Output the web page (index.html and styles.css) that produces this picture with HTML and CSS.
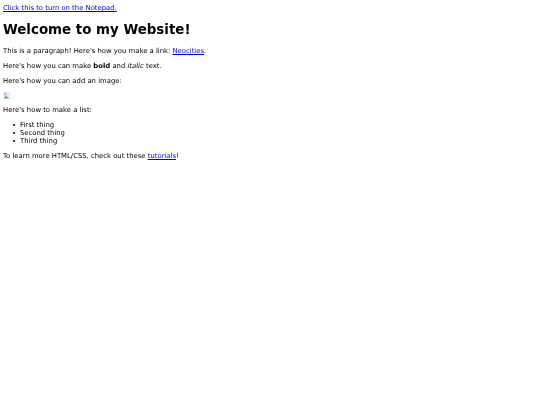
FILE: index.html
```html
<!DOCTYPE html>
<html>
<head>
  <meta charset="UTF-8" />
  <title>My Website</title>
  <link rel="stylesheet" href="styles.css">
</head>
<body>
  <a href="#">Click this to turn on the Notepad.</a>

  <h1>Welcome to my Website!</h1>

  <p>This is a paragraph! Here's how you make a link: <a href="#">Neocities</a>.</p>

  <p>Here's how you can make <strong>bold</strong> and <em>italic</em> text.</p>

  <p>Here's how you can add an image:</p>

  <svg class="broken-image" width="8" height="7" viewBox="0 0 8 7">
    <rect x="0.5" y="0.3" width="6" height="6.2" fill="#eef2f8" stroke="#d0d4da" stroke-width="0.5" />
    <rect x="1" y="0.8" width="3" height="2.5" fill="#b4c8ec" />
    <path d="M1 6.5 L3 3.5 L6 6.5 Z" fill="#6aab6a" />
  </svg>

  <p>Here's how to make a list:</p>

  <ul>
    <li>First thing</li>
    <li>Second thing</li>
    <li>Third thing</li>
  </ul>

  <p>To learn more HTML/CSS, check out these <a href="#">tutorials</a>!</p>
</body>
</html>
```

FILE: styles.css
```css
html {
  background-color: #fff;
}

body {
  margin: 4px 3px 3px;
  font-family: "DejaVu Sans", sans-serif;
  font-size: 6.85px;
  line-height: 8px;
  color: #000;
  filter: blur(0.25px);
}

a {
  color: #0000ee;
}

h1 {
  font-size: 13.4px;
  line-height: 16px;
  margin: 10px 0 9px;
}

p {
  margin: 7px 0;
}

ul {
  margin: 7px 0;
  padding-left: 10px;
  list-style: none;
}

li {
  display: flex;
  align-items: center;
  gap: 5px;
}

li::before {
  content: "";
  width: 2px;
  height: 2px;
  border-radius: 50%;
  background-color: #000;
}

.broken-image {
  display: block;
}
```
